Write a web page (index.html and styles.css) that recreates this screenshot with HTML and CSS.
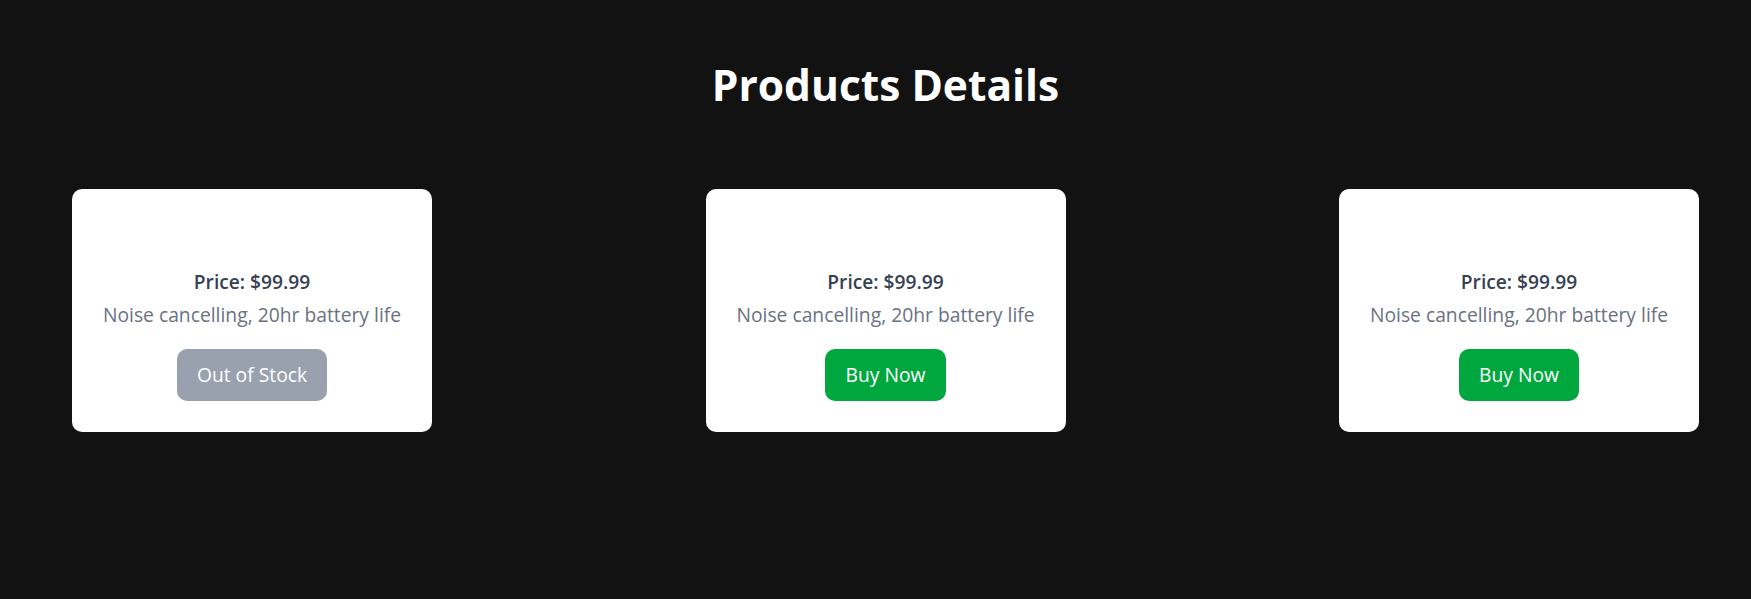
FILE: index.html
```html
<!DOCTYPE html>
<html lang="en">
<head>
<meta charset="utf-8">
<title>Products Details</title>
<link rel="stylesheet" href="styles.css">
</head>
<body>
<main class="page">
  <h1 class="title">Products Details</h1>
  <section class="cards">
    <article class="card">
      <div class="card-media"></div>
      <p class="price">Price: $99.99</p>
      <p class="desc">Noise cancelling, 20hr battery life</p>
      <button class="btn btn-disabled" disabled>Out of Stock</button>
    </article>
    <article class="card">
      <div class="card-media"></div>
      <p class="price">Price: $99.99</p>
      <p class="desc">Noise cancelling, 20hr battery life</p>
      <button class="btn btn-buy">Buy Now</button>
    </article>
    <article class="card">
      <div class="card-media"></div>
      <p class="price">Price: $99.99</p>
      <p class="desc">Noise cancelling, 20hr battery life</p>
      <button class="btn btn-buy">Buy Now</button>
    </article>
  </section>
</main>
</body>
</html>
```

FILE: styles.css
```css
html, body {
  margin: 0;
  background: #121212;
}
body {
  font-family: "Open Sans", "Noto Sans", sans-serif;
}
.page {
  padding: 60px 52px 0 72px;
}
.title {
  margin: 0 0 79px;
  text-align: center;
  color: #ffffff;
  font-size: 42.5px;
  line-height: 50px;
  font-weight: 700;
}
.cards {
  display: flex;
  justify-content: space-between;
}
.card {
  width: 360px;
  box-sizing: border-box;
  background: #ffffff;
  border-radius: 10px;
  padding: 30px 20px 31px;
  text-align: center;
}
.card-media {
  height: 48px;
}
.price {
  margin: 0;
  font-size: 19.2px;
  line-height: 30px;
  font-weight: 600;
  color: #364153;
}
.desc {
  margin: 3px 0 0;
  font-size: 19.3px;
  line-height: 30px;
  color: #6a7282;
}
.btn {
  margin-top: 19px;
  padding: 12px 20px;
  border: none;
  border-radius: 10px;
  font-family: inherit;
  font-size: 19.3px;
  line-height: 28px;
  color: #ffffff;
}
.btn-disabled {
  background: #99a1af;
}
.btn-buy {
  background: #00a63e;
}
```
